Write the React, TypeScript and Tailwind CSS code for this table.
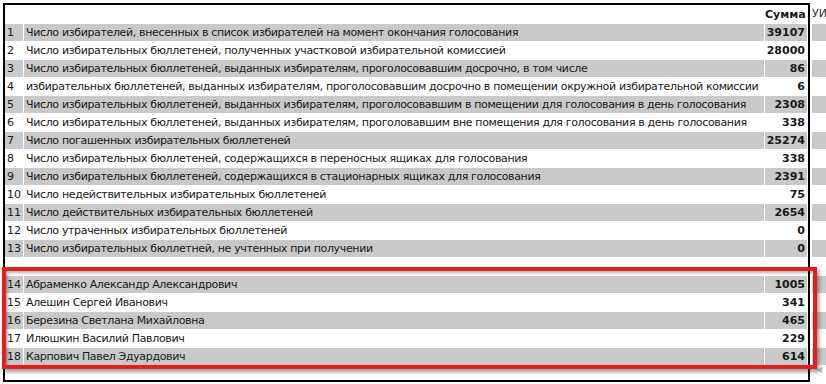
const rows: [string, string, string][] = [
  ['1', 'Число избирателей, внесенных в список избирателей на момент окончания голосования', '39107'],
  ['2', 'Число избирательных бюллетеней, полученных участковой избирательной комиссией', '28000'],
  ['3', 'Число избирательных бюллетеней, выданных избирателям, проголосовавшим досрочно, в том числе', '86'],
  ['4', 'избирательных бюллетеней, выданных избирателям, проголосовавшим досрочно в помещении окружной избирательной комиссии', '6'],
  ['5', 'Число избирательных бюллетеней, выданных избирателям, проголосовавшим в помещении для голосования в день голосования', '2308'],
  ['6', 'Число избирательных бюллетеней, выданных избирателям, проголовавшим вне помещения для голосования в день голосования', '338'],
  ['7', 'Число погашенных избирательных бюллетеней', '25274'],
  ['8', 'Число избирательных бюллетеней, содержащихся в переносных ящиках для голосования', '338'],
  ['9', 'Число избирательных бюллетеней, содержащихся в стационарных ящиках для голосования', '2391'],
  ['10', 'Число недействительных избирательных бюллетеней', '75'],
  ['11', 'Число действительных избирательных бюллетеней', '2654'],
  ['12', 'Число утраченных избирательных бюллетеней', '0'],
  ['13', 'Число избирательных бюллетней, не учтенных при получении', '0'],
];

const candidates: [string, string, string][] = [
  ['14', 'Абраменко Александр Александрович', '1005'],
  ['15', 'Алешин Сергей Иванович', '341'],
  ['16', 'Березина Светлана Михайловна', '465'],
  ['17', 'Илюшкин Василий Павлович', '229'],
  ['18', 'Карпович Павел Эдуардович', '614'],
];

function Row({ row, gray }: { row: [string, string, string]; gray: boolean }) {
  const bg = gray ? 'bg-[#c9c9c9]' : 'bg-white';
  return (
    <div className="flex h-[18px] gap-px pt-px">
      <div className={`w-[18px] ${bg} pl-[2px] leading-[17px] whitespace-nowrap`}>{row[0]}</div>
      <div className={`w-[740px] ${bg} pl-[2px] leading-[17px] whitespace-nowrap overflow-hidden tracking-[-0.35px]`}>{row[1]}</div>
      <div className={`w-[42px] ${bg} pr-[2px] text-right font-bold leading-[17px]`}>{row[2]}</div>
    </div>
  );
}

function SideCell({ gray }: { gray: boolean }) {
  return <div className="h-[18px] pt-px"><div className={`h-[17px] ${gray ? 'bg-[#c9c9c9]' : 'bg-white'}`} /></div>;
}

export default function App() {
  return (
    <div className="relative flex w-[826px] h-[384px] overflow-hidden bg-white text-[11px] text-[#181818] font-['DejaVu_Sans',sans-serif]">
      <div className="ml-[3px] mt-[3px] w-[807px] h-[379px] border-2 border-black flex flex-col">
        <div className="flex h-[18px] gap-px pt-px">
          <div className="w-[18px]" />
          <div className="w-[740px]" />
          <div className="w-[42px] pr-[2px] text-right font-bold leading-[17px]">Сумма</div>
        </div>
        {rows.map((r, i) => (
          <Row key={r[0]} row={r} gray={i % 2 === 0} />
        ))}
        <div className="h-[18px]" />
        {candidates.map((r, i) => (
          <Row key={r[0]} row={r} gray={i % 2 === 0} />
        ))}
      </div>
      <div className="mt-[5px] pl-[2px] flex-1 flex flex-col overflow-hidden">
        <div className="h-[18px] leading-[18px] whitespace-nowrap text-[#333]">УИК</div>
        {rows.map((r, i) => (
          <SideCell key={r[0]} gray={i % 2 === 0} />
        ))}
        <div className="h-[18px]" />
        {candidates.map((r, i) => (
          <SideCell key={r[0]} gray={i % 2 === 0} />
        ))}
        <div className="pl-[4px] text-[8px] leading-[10px] text-[#c4c4c4]">◀</div>
      </div>
      <div className="absolute left-[2px] top-[267px] w-[815px] h-[102px] border-4 border-[#e11f1f] shadow-[2px_3px_4px_rgba(0,0,0,0.4),inset_2px_2px_3px_rgba(0,0,0,0.3)]" />
    </div>
  );
}
